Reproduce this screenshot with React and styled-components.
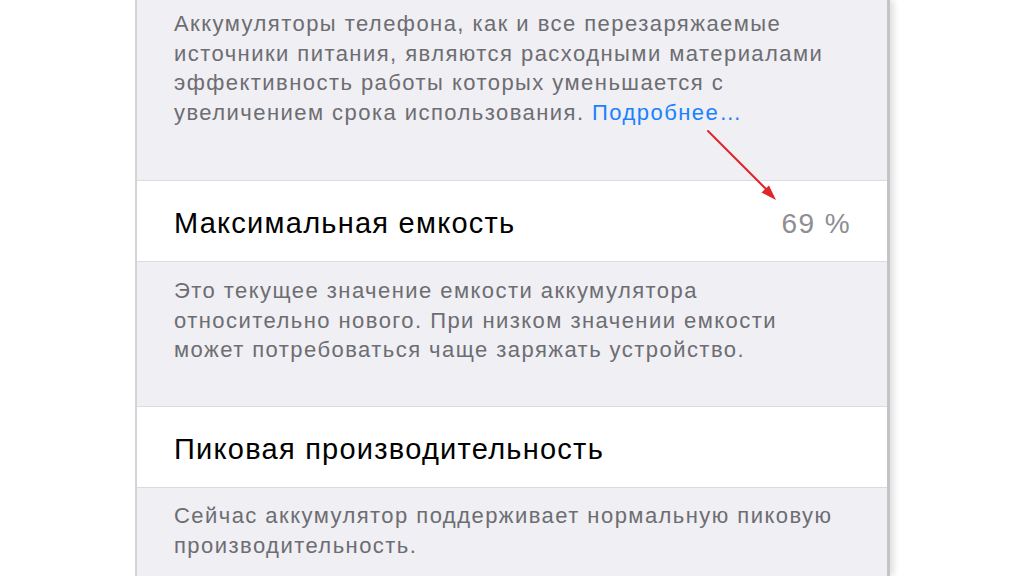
import React from "react"
import styled, { createGlobalStyle } from "styled-components"

const GlobalStyle = createGlobalStyle`
	html, body {
		margin: 0;
		padding: 0;
		background: #ffffff;
	}
	body {
		font-family: "Liberation Sans", Arial, sans-serif;
	}
`

const Page = styled.div`
	position: relative;
	width: 1024px;
	height: 576px;
	overflow: hidden;
	display: flex;
	padding-left: 135px;
	box-sizing: border-box;
	background: #ffffff;
`

const Panel = styled.div`
	width: 750px;
	height: 576px;
	display: flex;
	flex-direction: column;
	flex-shrink: 0;
	background: #efeff4;
	border-left: 2px solid #d3d3d6;
	box-shadow: 3px 0 0 #c4c4c6, 7px 0 6px rgba(0, 0, 0, 0.12);
	overflow: hidden;
`

const Footer = styled.p`
	margin: 0;
	flex-shrink: 0;
	padding: ${p => p.$top}px 36px ${p => p.$bottom}px 37px;
	font-size: 22px;
	line-height: 29.5px;
	letter-spacing: 1.45px;
	color: #6d6d72;
	white-space: nowrap;
`

const MoreLink = styled.a`
	color: #1a82fb;
	text-decoration: none;
`

const Row = styled.div`
	flex-shrink: 0;
	display: flex;
	align-items: center;
	justify-content: space-between;
	height: 80px;
	padding: 0 36px 0 37px;
	background: #ffffff;
	border-top: 1px solid #dcdce0;
	border-bottom: 1px solid #dcdce0;
`

const Title = styled.span`
	margin-top: 5px;
	font-size: 29px;
	letter-spacing: 1.25px;
	color: #000000;
`

const Value = styled.span`
	margin-top: 5px;
	font-size: 28px;
	letter-spacing: 1.4px;
	color: #8e8e93;
`

const Arrow = styled.svg`
	position: absolute;
	left: 0;
	top: 0;
	pointer-events: none;
`

export default function App() {
	return (
		<Page>
			<GlobalStyle />
			<Panel>
				<Footer $top={9} $bottom={53}>
					Аккумуляторы телефона, как и все перезаряжаемые<br />
					источники питания, являются расходными материалами<br />
					эффективность работы которых уменьшается с<br />
					увеличением срока использования. <MoreLink href="#">Подробнее…</MoreLink>
				</Footer>
				<Row>
					<Title>Максимальная емкость</Title>
					<Value>69 %</Value>
				</Row>
				<Footer $top={14} $bottom={41.5}>
					Это текущее значение емкости аккумулятора<br />
					относительно нового. При низком значении емкости<br />
					может потребоваться чаще заряжать устройство.
				</Footer>
				<Row>
					<Title>Пиковая производительность</Title>
				</Row>
				<Footer $top={13} $bottom={20}>
					Сейчас аккумулятор поддерживает нормальную пиковую<br />
					производительность.
				</Footer>
			</Panel>
			<Arrow width="1024" height="576" viewBox="0 0 1024 576">
				<line x1="708" y1="131" x2="767" y2="190" stroke="#e0262b" strokeWidth="2" strokeLinecap="round" />
				<polygon points="776,200 761.5,192.5 769,185.5" fill="#e0262b" />
			</Arrow>
		</Page>
	)
}
